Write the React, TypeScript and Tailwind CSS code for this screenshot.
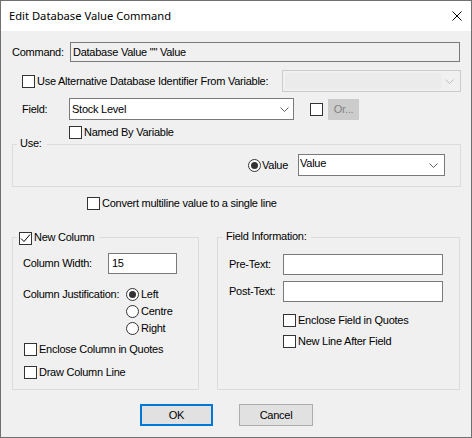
import React from 'react';

const CheckBox: React.FC<{ checked?: boolean }> = ({ checked }) => (
  <span className="flex w-[13px] h-[13px] shrink-0 items-center justify-center border border-[#333333] bg-white">
    {checked && (
      <svg width="11" height="11" viewBox="0 0 11 11">
        <path d="M1 5.5 L4 8.5 L10 1.5" fill="none" stroke="#000" strokeWidth="1" />
      </svg>
    )}
  </span>
);

const Radio: React.FC<{ checked?: boolean }> = ({ checked }) => (
  <span className="flex w-[13px] h-[13px] shrink-0 items-center justify-center rounded-full border border-[#333333] bg-white">
    {checked && <span className="w-[7px] h-[7px] rounded-full bg-[#333333]" />}
  </span>
);

const Chevron: React.FC<{ color?: string }> = ({ color = '#606060' }) => (
  <svg width="9" height="5" viewBox="0 0 9 5" className="shrink-0">
    <path d="M0.5 0.5 L4.5 4.5 L8.5 0.5" fill="none" stroke={color} strokeWidth="1" />
  </svg>
);

const CheckRow: React.FC<{ label: string; className?: string; checked?: boolean }> = ({
  label,
  className = '',
  checked
}) => (
  <div className={`flex items-center h-[13px] gap-[2px] ${className}`}>
    <CheckBox checked={checked} />
    <span className="whitespace-nowrap">{label}</span>
  </div>
);

export default function App() {
  return (
    <div className="w-[472px] h-[438px] overflow-hidden border border-[#707070] bg-[#f0f0f0] flex flex-col text-[11px] leading-[13px] tracking-[-0.25px] text-black font-['Liberation_Sans',Arial,sans-serif]">
      {/* Title bar */}
      <div className="h-[30px] shrink-0 bg-white flex items-center pl-[8px] pr-[9px]">
        <span className="font-['Noto_Sans',sans-serif] text-[11.2px] tracking-normal leading-[16px]">Edit Database Value Command</span>
        <svg width="10" height="10" viewBox="0 0 10 10" className="ml-auto">
          <path d="M0.5 0.5 L9.5 9.5 M9.5 0.5 L0.5 9.5" stroke="#000" strokeWidth="1" />
        </svg>
      </div>

      {/* Command */}
      <div className="flex items-center h-[20px] mt-[11px] ml-[11px]">
        <span className="w-[58px]">Command:</span>
        <div className="w-[390px] h-[20px] border border-[#7a7a7a] flex items-center pl-[2px] whitespace-nowrap">
          Database Value "" Value
        </div>
      </div>

      {/* Alternative identifier */}
      <div className="flex items-center h-[22px] mt-[8px]">
        <CheckRow className="ml-[21px]" label="Use Alternative Database Identifier From Variable:" />
        <div className="ml-auto mr-[10px] w-[179px] h-[22px] border border-[#cccccc] flex items-center p-[2px]">
          <div className="flex-1 h-full bg-[#ebebeb]" />
          <div className="w-[17px] flex justify-center">
            <Chevron color="#bcbcbc" />
          </div>
        </div>
      </div>

      {/* Field */}
      <div className="flex items-center h-[22px] mt-[6px]">
        <span className="ml-[21px] w-[47px]">Field:</span>
        <div className="w-[225px] h-[22px] border border-[#7a7a7a] bg-white flex items-center pl-[2px] pr-[4px]">
          <span className="flex-1">Stock Level</span>
          <Chevron />
        </div>
        <span className="ml-[16px]">
          <CheckBox />
        </span>
        <div className="ml-[5px] self-end w-[31px] h-[21px] bg-[#cccccc] text-[#838383] flex items-center justify-center">
          Or...
        </div>
      </div>

      <CheckRow className="mt-[6px] ml-[68px]" label="Named By Variable" />

      {/* Use group */}
      <div className="relative mt-[5px] ml-[11px] w-[449px] h-[43px] shrink-0 border border-[#dcdcdc]">
        <span className="absolute left-[4px] -top-[8px] pl-[3px] pr-[5px] bg-[#f0f0f0]">Use:</span>
        <div className="flex justify-end items-center h-[22px] mt-[9px] pr-[15px]">
          <div className="w-[50px] flex items-center gap-[1px]">
            <Radio checked />
            <span>Value</span>
          </div>
          <div className="w-[147px] h-[22px] border border-[#7a7a7a] bg-white flex items-start pt-[2px] pl-[1px] pr-[6px]">
            <span className="flex-1">Value</span>
            <span className="mt-[6px]">
              <Chevron />
            </span>
          </div>
        </div>
      </div>

      <CheckRow className="mt-[10px] ml-[86px]" label="Convert multiline value to a single line" />

      {/* Lower groups */}
      <div className="flex mt-[27px] ml-[11px] gap-[18px]">
        <div className="relative w-[187px] h-[153px] shrink-0 border border-[#dcdcdc] flex flex-col">
          <div className="absolute left-[4px] -top-[6px] pl-[2px] pr-[5px] bg-[#f0f0f0] flex items-center h-[13px] gap-[2px]">
            <CheckBox checked />
            <span className="-mt-[2px]">New Column</span>
          </div>

          <div className="flex items-center h-[21px] mt-[15px] ml-[10px]">
            <span className="w-[85px]">Column Width:</span>
            <div className="w-[69px] h-[21px] border border-[#7a7a7a] bg-white flex items-center pl-[3px]">15</div>
          </div>

          <div className="flex mt-[14px] ml-[10px]">
            <span className="w-[103px] leading-[13px] whitespace-nowrap">Column Justification:</span>
            <div className="flex flex-col gap-[4px]">
              {[
                { label: 'Left', checked: true },
                { label: 'Centre', checked: false },
                { label: 'Right', checked: false }
              ].map(opt => (
                <div key={opt.label} className="flex items-center h-[13px] gap-[2px]">
                  <Radio checked={opt.checked} />
                  <span>{opt.label}</span>
                </div>
              ))}
            </div>
          </div>

          <CheckRow className="mt-[8px] ml-[11px]" label="Enclose Column in Quotes" />
          <CheckRow className="mt-[10px] ml-[11px]" label="Draw Column Line" />
        </div>

        <div className="relative w-[243px] h-[153px] shrink-0 border border-[#dcdcdc] flex flex-col">
          <span className="absolute left-[4px] -top-[8px] pl-[4px] pr-[5px] bg-[#f0f0f0]">Field Information:</span>

          <div className="flex items-center h-[21px] mt-[16px] ml-[11px]">
            <span className="w-[54px]">Pre-Text:</span>
            <div className="w-[160px] h-[21px] border border-[#7a7a7a] bg-white" />
          </div>
          <div className="flex items-center h-[21px] mt-[6px] ml-[11px]">
            <span className="w-[54px]">Post-Text:</span>
            <div className="w-[160px] h-[21px] border border-[#7a7a7a] bg-white" />
          </div>

          <CheckRow className="mt-[12px] ml-[65px]" label="Enclose Field in Quotes" />
          <CheckRow className="mt-[8px] ml-[65px]" label="New Line After Field" />
        </div>
      </div>

      {/* Buttons */}
      <div className="flex mt-[14px] ml-[139px] gap-[26px]">
        <div className="w-[73px] h-[22px] border-2 border-[#0078d7] bg-[#e1e1e1] flex items-center justify-center">OK</div>
        <div className="w-[74px] h-[22px] border border-[#adadad] bg-[#e1e1e1] flex items-center justify-center">Cancel</div>
      </div>
    </div>
  );
}
